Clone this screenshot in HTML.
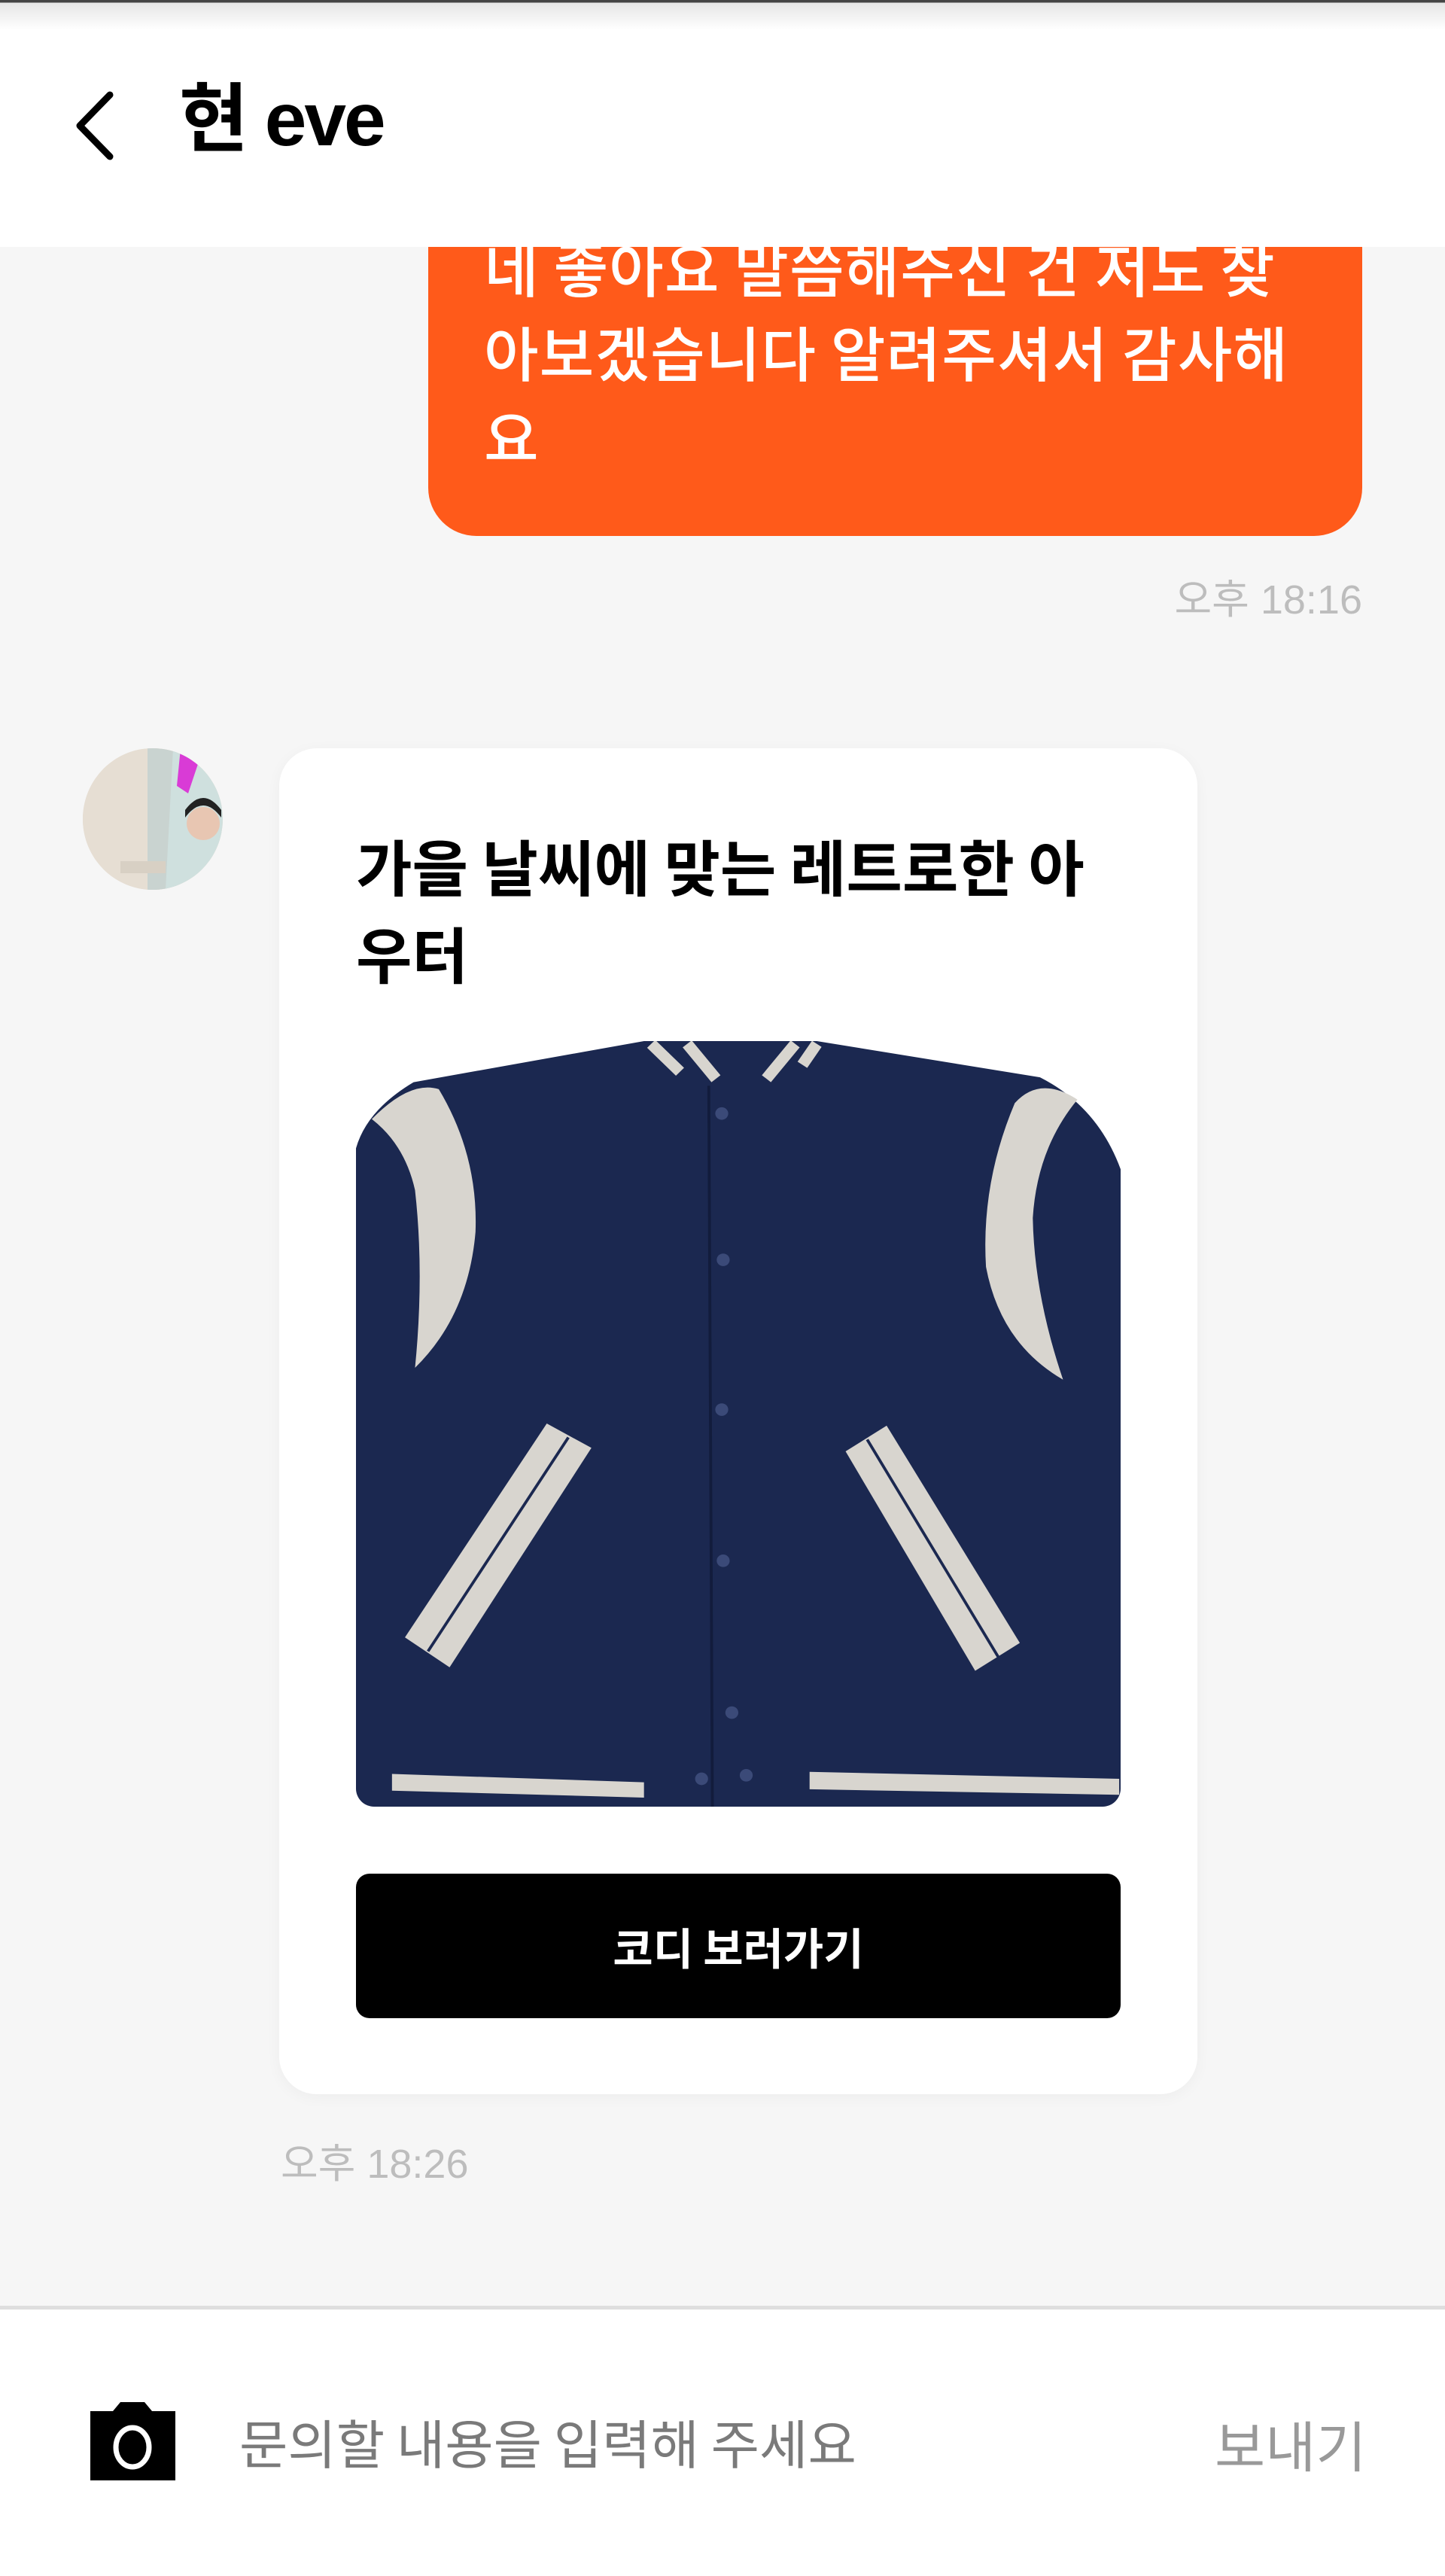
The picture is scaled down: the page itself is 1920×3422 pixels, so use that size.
<!DOCTYPE html>
<html><head><meta charset="utf-8"><style>
*{margin:0;padding:0;box-sizing:border-box}
body{width:1920px;height:3422px;background:#f6f6f6;position:relative;overflow:hidden;font-family:"Liberation Sans","Noto Sans CJK KR",sans-serif}
.hdr{position:absolute;left:0;top:0;width:1920px;height:328px;background:#fff;z-index:5}
.hdr .bar{position:absolute;left:0;top:0;width:100%;height:40px;background:linear-gradient(#444 0,#444 3px,#e6e6e6 4px,#fff 40px)}
.title{position:absolute;left:238px;top:94px;font-size:100px;font-weight:bold;color:#000;letter-spacing:-3px;line-height:130px}
.bubble{position:absolute;left:569px;top:150px;width:1241px;height:562px;background:#ff5a1a;border-radius:0 0 64px 64px;color:#fff;font-family:"Noto Sans CJK KR",sans-serif;font-weight:500;font-size:79px;line-height:112px;letter-spacing:1px;padding:148px 30px 0 74px;white-space:nowrap}
.t{position:absolute;color:#bdbdbd;font-size:54px;font-family:"Liberation Sans","Noto Sans CJK KR",sans-serif}
.avatar{position:absolute;left:110px;top:994px;width:186px;height:188px;border-radius:50%;overflow:hidden;background:#e7e0d6}
.card{position:absolute;left:371px;top:994px;width:1220px;height:1788px;background:#fff;border-radius:50px;box-shadow:0 4px 20px rgba(0,0,0,0.04)}
.ct{position:absolute;left:102px;top:98px;font-family:"Noto Sans CJK KR",sans-serif;font-weight:bold;font-size:81px;line-height:116px;color:#000;width:1100px;white-space:nowrap}
.img{position:absolute;left:102px;top:389px;width:1016px;height:1017px;border-radius:24px;overflow:hidden;background:#fff}
.btn{position:absolute;left:102px;top:1495px;width:1016px;height:192px;background:#000;border-radius:18px;color:#fff;font-family:"Noto Sans CJK KR",sans-serif;font-weight:bold;font-size:58px;text-align:center;line-height:192px}
.foot{position:absolute;left:0;top:3063px;width:1920px;height:359px;background:#fff;border-top:5px solid #dedede}
.ph{position:absolute;left:318px;top:3194px;font-family:"Noto Sans CJK KR",sans-serif;font-size:70px;color:#7a7a7a;line-height:100px}
.send{position:absolute;left:1614px;top:3196px;font-family:"Noto Sans CJK KR",sans-serif;font-size:73px;color:#999;line-height:100px}
</style></head><body>
<div class="bubble">네 좋아요 말씀해주신 건 저도 찾<br>아보겠습니다 알려주셔서 감사해<br>요</div>
<div class="hdr"><div class="bar"></div>
<svg style="position:absolute;left:96px;top:120px" width="60" height="94" viewBox="0 0 60 94"><path d="M50 6 L10 47 L50 88" fill="none" stroke="#000" stroke-width="9" stroke-linecap="round" stroke-linejoin="round"/></svg>
<div class="title">현 eve</div></div>
<div class="t" style="right:110px;top:752px">오후 18:16</div>
<div class="avatar"><svg width="186" height="188" viewBox="0 0 186 188">
<rect width="186" height="188" fill="#e6ded3"/>
<rect x="86" y="0" width="40" height="188" fill="#c9d3d0"/>
<polygon points="120,0 186,0 186,188 110,188" fill="#cfe0de"/>
<polygon points="130,0 160,0 140,60 125,50" fill="#d93bd6"/>
<circle cx="160" cy="100" r="22" fill="#e8c6b2"/>
<path d="M136 92 Q160 60 184 92 L184 82 Q160 50 136 82Z" fill="#222"/>
<rect x="50" y="150" width="60" height="16" fill="#d8d0c4"/>
</svg></div>
<div class="card">
<div class="ct">가을 날씨에 맞는 레트로한 아<br>우터</div>
<div class="img"><svg width="1016" height="1017" viewBox="390 436 1062 1099" preserveAspectRatio="none">
<rect x="390" y="436" width="1062" height="1099" fill="#fff"/>
<path d="M390,1535 L390,590 Q405,535 470,495 L790,436 L1030,436 L1340,488 Q1420,530 1452,620 L1452,1535 Z" fill="#1b2850"/>
<path d="M412,548 Q465,492 505,505 Q560,600 556,710 Q546,830 472,905 Q485,770 472,650 Q458,585 412,548 Z" fill="#d8d5cf"/>
<path d="M1392,520 Q1340,485 1305,525 Q1258,640 1265,760 Q1285,870 1372,922 Q1332,800 1330,690 Q1336,590 1392,520 Z" fill="#d8d5cf"/>
<path d="M800,440 L840,480 M850,440 L890,490 M960,490 L1000,440 M1010,470 L1030,440" stroke="#d8d5cf" stroke-width="16"/>
<line x1="880" y1="500" x2="885" y2="1535" stroke="#121c3c" stroke-width="4"/>
<polygon points="655,985 717,1020 520,1335 458,1292" fill="#d8d5cf"/>
<line x1="685" y1="1005" x2="490" y2="1312" stroke="#1b2850" stroke-width="4"/>
<polygon points="1070,1025 1127,988 1312,1300 1250,1340" fill="#d8d5cf"/>
<line x1="1100" y1="1008" x2="1282" y2="1320" stroke="#1b2850" stroke-width="4"/>
<polygon points="440,1488 790,1500 790,1522 440,1512" fill="#d8d5cf"/>
<polygon points="1020,1485 1450,1495 1450,1518 1020,1510" fill="#d8d5cf"/>
<g fill="#3b4a78"><circle cx="898" cy="540" r="9"/><circle cx="900" cy="750" r="9"/><circle cx="898" cy="965" r="9"/><circle cx="900" cy="1182" r="9"/><circle cx="912" cy="1400" r="9"/><circle cx="870" cy="1495" r="9"/><circle cx="932" cy="1490" r="9"/></g>
</svg></div>
<div class="btn">코디 보러가기</div>
</div>
<div class="t" style="left:373px;top:2830px">오후 18:26</div>
<div class="foot"></div>
<svg style="position:absolute;left:120px;top:3191px" width="113" height="104" viewBox="0 0 113 104"><path d="M0 12 L30 12 L40 0 L72 0 L82 12 L113 12 L113 104 L0 104 Z" fill="#000"/><ellipse cx="56" cy="60" rx="22" ry="26" fill="none" stroke="#fff" stroke-width="7"/></svg>
<div class="ph">문의할 내용을 입력해 주세요</div>
<div class="send">보내기</div>
</body></html>
